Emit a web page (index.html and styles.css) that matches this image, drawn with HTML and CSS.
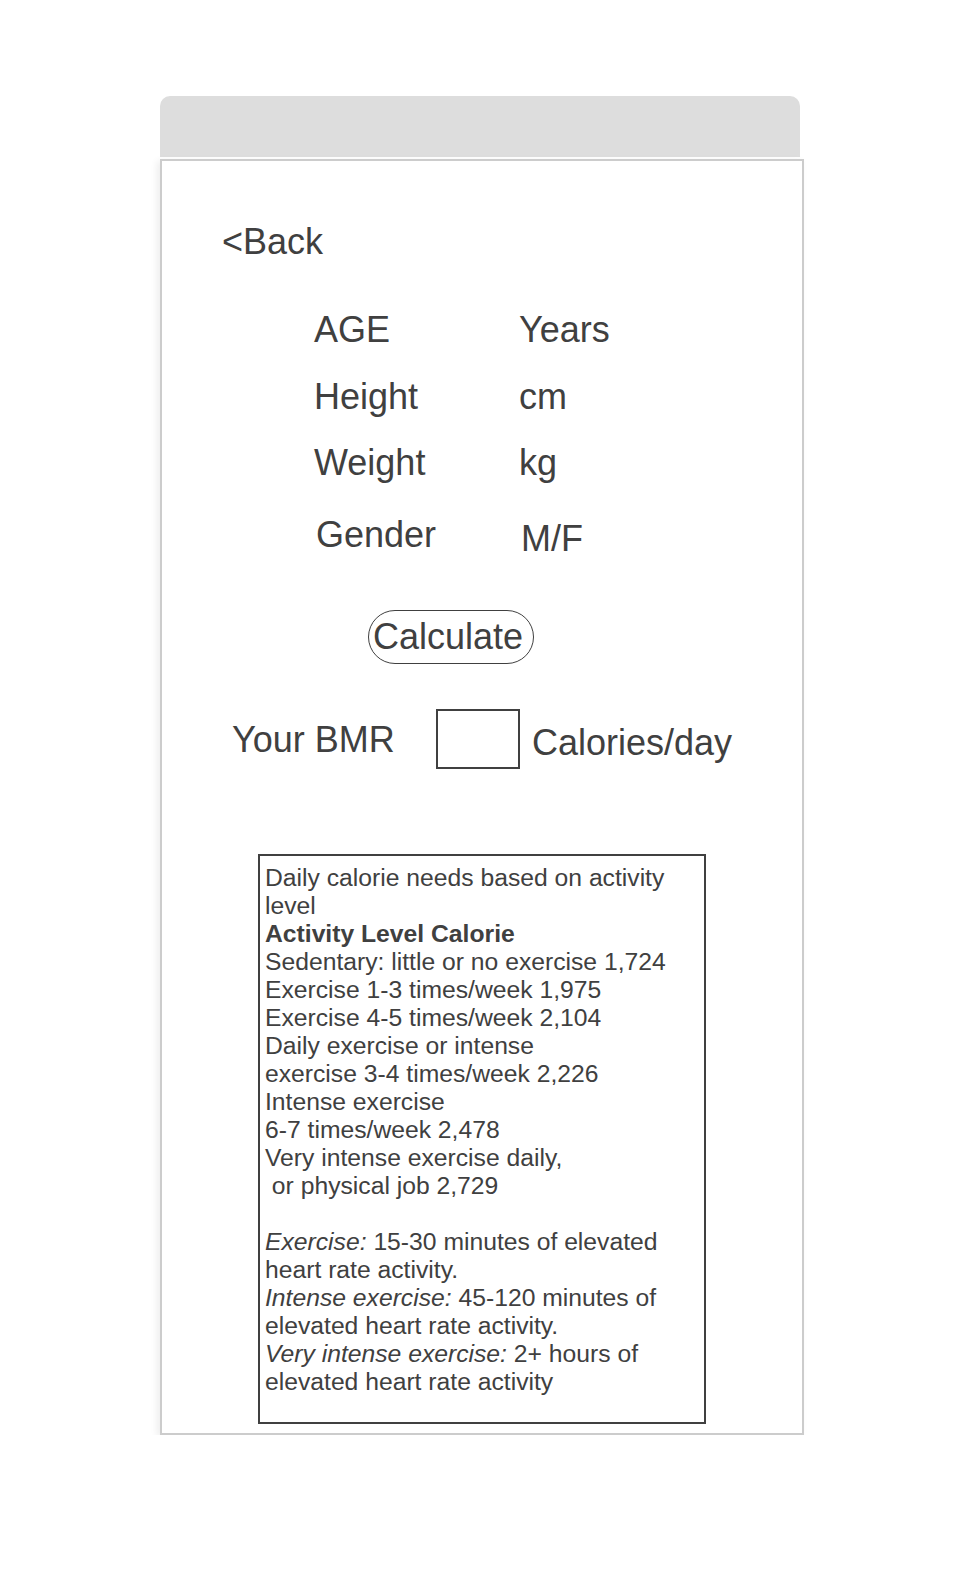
FILE: index.html
```html
<!DOCTYPE html>
<html lang="en">
<head>
<meta charset="utf-8">
<title>BMR Calculator</title>
<link rel="stylesheet" href="styles.css">
</head>
<body>
<div class="frame">
  <div class="titlebar"></div>
  <div class="card">
    <div class="back">&lt;Back</div>
    <div class="row row-age"><span class="label">AGE</span><span class="value">Years</span></div>
    <div class="row row-height"><span class="label">Height</span><span class="value">cm</span></div>
    <div class="row row-weight"><span class="label">Weight</span><span class="value">kg</span></div>
    <div class="row row-gender"><span class="label label-gender">Gender</span><span class="value value-gender">M/F</span></div>
    <div class="calc">Calculate</div>
    <div class="bmr">
      <span class="bmr-label">Your BMR</span>
      <span class="bmr-box"></span>
      <span class="bmr-unit">Calories/day</span>
    </div>
    <div class="info">
      <div class="info-table">
        Daily calorie needs based on activity level<br>
        <b>Activity Level Calorie</b><br>
        Sedentary: little or no exercise 1,724<br>
        Exercise 1-3 times/week 1,975<br>
        Exercise 4-5 times/week 2,104<br>
        Daily exercise or intense<br>
        exercise 3-4 times/week 2,226<br>
        Intense exercise<br>
        6-7 times/week 2,478<br>
        Very intense exercise daily,<br>
        &nbsp;or physical job 2,729
      </div>
      <div class="info-notes">
        <i>Exercise:</i> 15-30 minutes of elevated heart rate activity.<br>
        <i>Intense exercise:</i> 45-120 minutes of elevated heart rate activity.<br>
        <i>Very intense exercise:</i> 2+ hours of elevated heart rate activity
      </div>
    </div>
  </div>
</div>
</body>
</html>
```

FILE: styles.css
```css
* {
  box-sizing: border-box;
}

body {
  margin: 0;
  background: #ffffff;
  font-family: "Liberation Sans", Arial, sans-serif;
  color: #404040;
}

.frame {
  margin: 96px 0 0 160px;
  width: 644px;
}

.titlebar {
  width: 640px;
  height: 61px;
  background: #dddddd;
  border-radius: 10px 10px 0 0;
}

.card {
  margin-top: 2px;
  width: 644px;
  height: 1276px;
  border: 2px solid #cccccc;
  box-shadow: -3px 2px 7px rgba(0, 0, 0, 0.07);
  padding-top: 61px;
}

.back,
.row,
.calc,
.bmr {
  font-size: 36px;
  line-height: 40px;
}

.back {
  margin-left: 60px;
}

.row {
  display: flex;
  margin-left: 152px;
}

.label {
  width: 205px;
}

.row-age {
  margin-top: 48px;
}

.row-height {
  margin-top: 27px;
}

.row-weight {
  margin-top: 26px;
}

.row-gender {
  margin-top: 32px;
  align-items: flex-start;
}

.label-gender {
  padding-left: 2px;
}

.value-gender {
  padding-top: 4px;
  padding-left: 2px;
}

.calc {
  margin: 51px 0 0 206px;
  width: 166px;
  height: 54px;
  border: 1.5px solid #404040;
  border-radius: 27px;
  line-height: 52px;
  padding-left: 4px;
  white-space: nowrap;
}

.bmr {
  display: flex;
  align-items: flex-start;
  margin: 45px 0 0 70px;
}

.bmr-label {
  margin-top: 11px;
  width: 204px;
}

.bmr-box {
  width: 84px;
  height: 60px;
  border: 2px solid #404040;
}

.bmr-unit {
  margin: 14px 0 0 12px;
}

.info {
  margin: 85px 0 0 96px;
  width: 448px;
  height: 570px;
  border: 2px solid #404040;
  padding: 8px 4px 0 5px;
  font-size: 24.7px;
  line-height: 28px;
}

.info-notes {
  margin-top: 28px;
}
```
